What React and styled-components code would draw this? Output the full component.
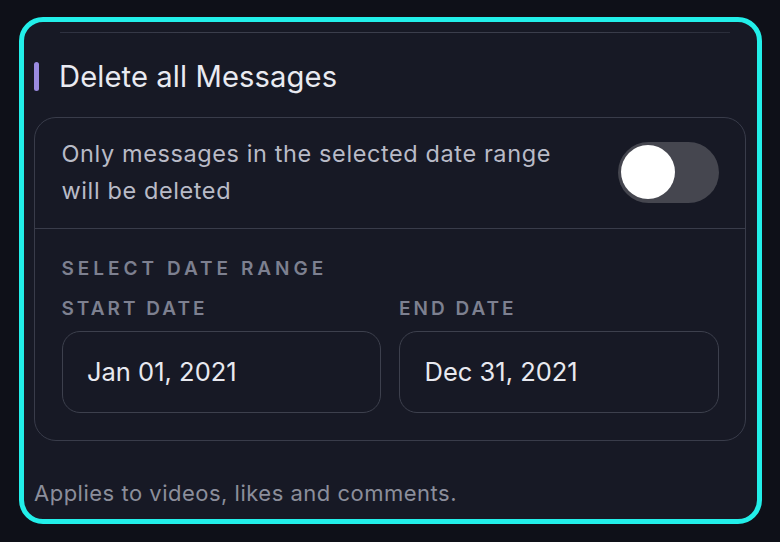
import React from 'react';
import styled, { createGlobalStyle } from 'styled-components';

const GlobalStyle = createGlobalStyle`
  html, body {
    margin: 0;
    padding: 0;
    background: #0e1018;
    font-family: Inter, "Noto Sans", sans-serif;
  }
  * { box-sizing: border-box; }
`;

const Page = styled.div`
  width: 780px;
  height: 542px;
  padding: 17px 18px 18px 19px;
`;

const Card = styled.section`
  width: 743px;
  height: 507px;
  border: 5px solid #22efe9;
  border-radius: 24px;
  background: #171925;
  padding: 10px 11px 0 10px;
  display: flex;
  flex-direction: column;
  overflow: hidden;

  & > * {
    flex-shrink: 0;
  }
`;

const TopRule = styled.div`
  height: 1px;
  margin: 0 16px 0 26px;
  background: linear-gradient(90deg, #2e3140, #3b3e4c 20%, #3b3e4c 80%, #2a2d3a);
`;

const Header = styled.div`
  display: flex;
  align-items: center;
  gap: 20px;
  padding: 24px 0 20px;
  height: 83.5px;
`;

const Accent = styled.span`
  width: 5px;
  height: 29px;
  border-radius: 3px;
  background: #9a8ae0;
`;

const Title = styled.h2`
  margin: 0;
  font-size: 29.2px;
  line-height: 40px;
  font-weight: 400;
  letter-spacing: 0.1px;
  color: #e9eaf1;
`;

const Panel = styled.div`
  border: 1.5px solid #393c4a;
  border-radius: 22px;
`;

const ToggleRow = styled.div`
  display: flex;
  align-items: center;
  justify-content: space-between;
  padding: 17.5px 26.5px 19px;
  border-bottom: 1.5px solid #393c4a;
`;

const Note = styled.p`
  margin: 0;
  max-width: 520px;
  font-size: 23.5px;
  line-height: 37px;
  letter-spacing: 0.6px;
  color: #b9bbc7;
`;

const Track = styled.div`
  width: 101px;
  height: 61px;
  border-radius: 31px;
  background: #45464f;
  padding: 3.5px;
  display: flex;
  justify-content: ${p => (p.$on ? 'flex-end' : 'flex-start')};
`;

const Knob = styled.span`
  width: 54px;
  height: 54px;
  border-radius: 50%;
  background: #ffffff;
`;

const RangeSection = styled.div`
  padding: 27.5px 26.5px 27px;
`;

const Label = styled.div`
  font-size: 19px;
  line-height: 24px;
  font-weight: 600;
  letter-spacing: ${p => p.$spacing || 3}px;
  text-transform: uppercase;
  color: #7d8090;
`;

const Fields = styled.div`
  display: grid;
  grid-template-columns: 1fr 1fr;
  gap: 18px;
  margin-top: 16px;
`;

const Field = styled.div`
  display: flex;
  flex-direction: column;
  gap: 10px;
`;

const DateBox = styled.div`
  height: 82px;
  border: 1.5px solid #3d404d;
  border-radius: 18px;
  display: flex;
  align-items: center;
  padding: 0 24.5px;
  font-size: 25.5px;
  color: #e8e9f0;
`;

const Footer = styled.p`
  margin: 39px 0 0;
  font-size: 22px;
  line-height: 26px;
  letter-spacing: 0.5px;
  color: #8b8e9b;
`;

export default function App() {
  return (
    <Page>
      <GlobalStyle />
      <Card>
        <TopRule />
        <Header>
          <Accent />
          <Title>Delete all Messages</Title>
        </Header>
        <Panel>
          <ToggleRow>
            <Note>Only messages in the selected date range will be deleted</Note>
            <Track $on={false}>
              <Knob />
            </Track>
          </ToggleRow>
          <RangeSection>
            <Label $spacing={4}>Select date range</Label>
            <Fields>
              <Field>
                <Label>Start date</Label>
                <DateBox>Jan 01, 2021</DateBox>
              </Field>
              <Field>
                <Label>End date</Label>
                <DateBox>Dec 31, 2021</DateBox>
              </Field>
            </Fields>
          </RangeSection>
        </Panel>
        <Footer>Applies to videos, likes and comments.</Footer>
      </Card>
    </Page>
  );
}
